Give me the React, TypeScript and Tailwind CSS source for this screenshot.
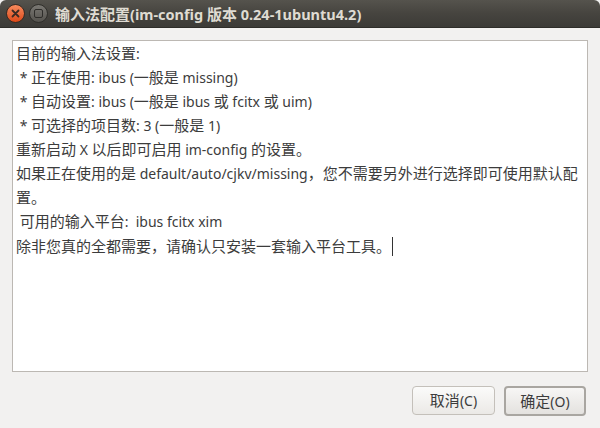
// ImConfigDialog — im-config 信息对话框（Ubuntu Ambiance 风格）

const lines = [
  '目前的输入法设置:',
  ' * 正在使用: ibus (一般是 missing)',
  ' * 自动设置: ibus (一般是 ibus 或 fcitx 或 uim)',
  ' * 可选择的项目数: 3 (一般是 1)',
  '重新启动 X 以后即可启用 im-config 的设置。',
  '如果正在使用的是 default/auto/cjkv/missing，您不需要另外进行选择即可使用默认配',
  '置。',
  ' 可用的输入平台:  ibus fcitx xim',
];

const font = { fontFamily: '"Noto Sans", "Noto Sans CJK SC", sans-serif' };

// CJK glyphs come out a touch larger than the latin text in the original
function Mixed({ text }: { text: string }) {
  const parts = text.split(/([\u3000-\u9fff\uff00-\uffef]+)/);
  return (
    <>
      {parts.map((p, i) =>
        i % 2 === 1 ? (
          <span key={i} className="text-[15px] leading-[16px]">
            {p}
          </span>
        ) : (
          p
        )
      )}
    </>
  );
}

export default function App() {
  return (
    <div className="w-[600px] h-[428px] flex flex-col bg-[#f2f1f0] overflow-hidden" style={font}>
      {/* title bar */}
      <div className="h-[28px] shrink-0 flex items-center gap-[4px] pl-[6px] rounded-t-[6px] bg-gradient-to-b from-[#55534d] via-[#46443f] to-[#3c3b37] border-b border-[#2e2d29]">
        <div className="w-[19px] h-[19px] rounded-full bg-gradient-to-b from-[#f68a5c] to-[#dd4814] border border-[#3a2a22] flex items-center justify-center">
          <svg width="9" height="9" viewBox="0 0 9 9">
            <path d="M1.5 1.5 L7.5 7.5 M7.5 1.5 L1.5 7.5" stroke="#3c2a22" strokeWidth="1.8" strokeLinecap="round" />
          </svg>
        </div>
        <div className="w-[19px] h-[19px] rounded-full bg-gradient-to-b from-[#7a7873] to-[#55534e] border border-[#2f2e2a] flex items-center justify-center">
          <div className="w-[9px] h-[9px] rounded-[2px] border-[1.5px] border-[#2e2d2a]" />
        </div>
        <div className="ml-[3px] text-[14.5px] font-bold text-[#dfdbd2] leading-none">
          <Mixed text="输入法配置(im-config 版本 0.24-1ubuntu4.2)" />
        </div>
      </div>

      {/* text view */}
      <div className="mx-[12px] mt-[12px] h-[332px] bg-white border border-[#bcb8b3] px-[3px] pt-[1px] text-[14px] leading-[24px] text-[#3c3c3c] whitespace-pre">
        {lines.map((l, i) => (
          <div key={i} className="h-[24px]">
            <Mixed text={l} />
          </div>
        ))}
        <div className="h-[24px] flex items-center">
          <span className="text-[15px] leading-[16px]">除非您真的全都需要，请确认只安装一套输入平台工具。</span>
          <span className="ml-[1px] inline-block w-px h-[19px] bg-[#333]" />
        </div>
      </div>

      {/* buttons */}
      <div className="flex justify-end gap-[9px] mt-[14px] mr-[14px]">
        <button className="w-[83px] h-[29px] rounded-[4px] border border-[#c4c0ba] bg-gradient-to-b from-[#fbfbfa] to-[#ebe9e6] text-[14px] text-[#3c3c3c]">
          <Mixed text="取消(C)" />
        </button>
        <button className="w-[82px] h-[30px] rounded-[4px] border-2 border-[#a9a6a1] bg-gradient-to-b from-[#f7f6f5] to-[#e4e2df] text-[14px] text-[#3c3c3c]">
          <Mixed text="确定(O)" />
        </button>
      </div>
    </div>
  );
}
